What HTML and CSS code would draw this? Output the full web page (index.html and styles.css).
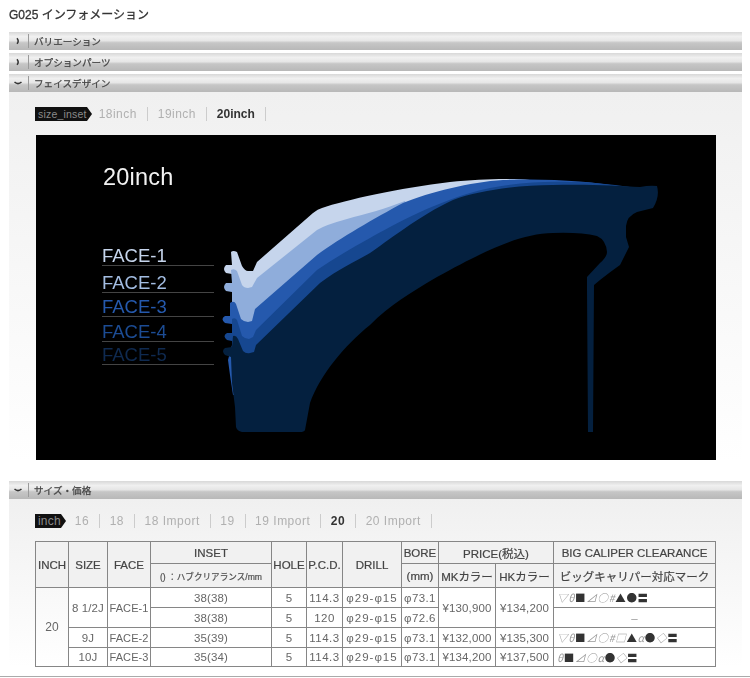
FILE: index.html
```html
<!DOCTYPE html>
<html lang="ja">
<head>
<meta charset="utf-8">
<title>G025 インフォメーション</title>
<link rel="stylesheet" href="styles.css">
</head>
<body>
<div class="page">
  <h1 class="title">G025 インフォメーション</h1>

  <div class="bar"><span class="chev"><svg width="8" height="8" viewBox="0 0 8 8"><path d="M3 1.2 Q5.4 4 3 6.8" class="chev-path"/></svg></span><span class="bar-label">バリエーション</span></div>
  <div class="bar"><span class="chev"><svg width="8" height="8" viewBox="0 0 8 8"><path d="M3 1.2 Q5.4 4 3 6.8" class="chev-path"/></svg></span><span class="bar-label">オプションパーツ</span></div>
  <div class="bar"><span class="chev"><svg width="8" height="8" viewBox="0 0 8 8"><path d="M0.5 3 Q4 6.2 7.5 3" class="chev-path"/></svg></span><span class="bar-label">フェイスデザイン</span></div>

  <section class="panel panel-face">
    <div class="tabs">
      <span class="tag">size_inset</span>
      <span class="tab">18inch</span>
      <span class="tab">19inch</span>
      <span class="tab on">20inch</span>
    </div>
    <div class="chart">
      <svg class="wheel" width="680" height="325" viewBox="36 135 680 325">
        <path class="f1" d="M231 252 Q233 250 237 252 L242 266 Q245 271 248 271 L253 271 L257 262 L313 213 Q318 209 322 208 C345 200 400 188 450 182 C480 179 510 178 530 180 L530 215 L300 300 L232 300 L232 274 L226 273 Q222 269 226 265 L232 265 Z"/>
        <path class="f2" d="M231 270 Q234 268 237 271 L242 285 Q244 288 248 288 L252 287 L257 278 L317 230 Q325 225 347 219 C365 214 385 209 405 201 L420 230 L260 340 L232 320 L232 292 L226 291 Q222 287 226 283 L232 283 Z"/>
        <path class="f3" d="M230 303 Q234 300 236 304 L241 319 Q244 322 248 322 L252 321 L255 309 L317 255 C340 238 375 218 403 203 C430 192 470 182 503 180 C545 178 590 181 625 187 L625 215 L500 215 L380 285 L300 400 L233 395 L230 375 L228 360 L232 345 L232 324 L225 323 Q220 319 225 316 L230 316 Z"/>
        <path class="f4" d="M232 319 Q235 317 237 320 L242 336 Q245 339 249 339 L253 337 L256 330 L317 270 C335 258 355 246 370 238 C395 224 430 205 470 193 C505 183 540 181 570 182 C590 182 610 184 630 187 L630 215 L500 215 L380 285 L300 400 L238 380 L232 360 L232 341 L227 340 Q222 336 227 333 L232 333 Z"/>
        <path class="f5" d="M233 336 Q236 335 238 339 L243 351 Q246 354 250 353 L254 352 L256 345 L320 283 C340 268 355 262 370 253 C385 243 420 215 453 200 C480 190 520 185 553 185 C590 184 620 186 640 187 Q650 185 657 186 Q660 197 653 208 L637 212 Q627 216 626 226 L626 237 L629 247 L620 265 Q610 272 600 280 L594 285 L593 432 L588 432 L587 290 L587 277 L600 263 Q607 257 607 252 Q606 240 597 236 Q580 232 553 233 C520 234 490 248 437 277 C410 293 390 305 370 325 C345 345 320 375 310 403 L305 430 Q304 432 300 432 L242 432 Q237 431 236 427 L235 407 L232 383 L231 357 L225 355 Q221 351 225 348 L232 347 Z"/>
      </svg>
      <div class="chart-size">20inch</div>
      <div class="face-list">
        <div class="face c1">FACE-1</div>
        <div class="face c2">FACE-2</div>
        <div class="face c3">FACE-3</div>
        <div class="face c4">FACE-4</div>
        <div class="face c5">FACE-5</div>
      </div>
    </div>
  </section>

  <div class="bar bar-size"><span class="chev"><svg width="8" height="8" viewBox="0 0 8 8"><path d="M0.5 3 Q4 6.2 7.5 3" class="chev-path"/></svg></span><span class="bar-label">サイズ・価格</span></div>

  <section class="panel panel-size">
    <div class="tabs tabs-inch">
      <span class="tag">inch</span>
      <span class="tab">16</span>
      <span class="tab">18</span>
      <span class="tab">18 Import</span>
      <span class="tab">19</span>
      <span class="tab">19 Import</span>
      <span class="tab on">20</span>
      <span class="tab">20 Import</span>
    </div>
    <table class="spec">
      <colgroup>
        <col class="w33"><col class="w39"><col class="w43"><col class="w121"><col class="w35"><col class="w36"><col class="w59"><col class="w37"><col class="w57"><col class="w58"><col class="w162">
      </colgroup>
      <thead>
        <tr class="h1">
          <th rowspan="2">INCH</th><th rowspan="2">SIZE</th><th rowspan="2">FACE</th><th>INSET</th><th rowspan="2">HOLE</th><th rowspan="2">P.C.D.</th><th rowspan="2">DRILL</th><th>BORE</th><th colspan="2">PRICE(税込)</th><th>BIG CALIPER CLEARANCE</th>
        </tr>
        <tr class="h2">
          <th class="note">() ：ハブクリアランス/mm</th><th>(mm)</th><th>MKカラー</th><th>HKカラー</th><th>ビッグキャリパー対応マーク</th>
        </tr>
      </thead>
      <tbody>
        <tr>
          <td rowspan="4" class="big">20</td><td rowspan="2">8 1/2J</td><td rowspan="2" class="fc">FACE-1</td><td>38(38)</td><td>5</td><td class="wide">114.3</td><td class="drill">φ29-φ15</td><td class="bore">φ73.1</td><td rowspan="2">¥130,900</td><td rowspan="2">¥134,200</td><td class="marks"><i>▽</i><i>θ</i><b>■</b><i>⊿</i><i>○</i><i>#</i><b>▲</b><b>●</b><b>〓</b></td>
        </tr>
        <tr>
          <td>38(38)</td><td>5</td><td class="wide">120</td><td class="drill">φ29-φ15</td><td class="bore">φ72.6</td><td class="dash">–</td>
        </tr>
        <tr>
          <td>9J</td><td class="fc">FACE-2</td><td>35(39)</td><td>5</td><td class="wide">114.3</td><td class="drill">φ29-φ15</td><td class="bore">φ73.1</td><td>¥132,000</td><td>¥135,300</td><td class="marks"><i>▽</i><i>θ</i><b>■</b><i>⊿</i><i>○</i><i>#</i><i>□</i><b>▲</b><i>α</i><b>●</b><i>◇</i><b>〓</b></td>
        </tr>
        <tr class="last">
          <td>10J</td><td class="fc">FACE-3</td><td>35(34)</td><td>5</td><td class="wide">114.3</td><td class="drill">φ29-φ15</td><td class="bore">φ73.1</td><td>¥134,200</td><td>¥137,500</td><td class="marks"><i>θ</i><b>■</b><i>⊿</i><i>○</i><i>α</i><b>●</b><i>◇</i><b>〓</b></td>
        </tr>
      </tbody>
    </table>
  </section>
  <div class="rule"></div>
</div>
</body>
</html>
```

FILE: styles.css
```css
* { box-sizing: border-box; }
html, body { margin: 0; background: #fff; }
body { font-family: "Liberation Sans", "Noto Sans CJK JP", sans-serif; color: #555; overflow: hidden; }
.page { width: 750px; height: 678px; padding: 9px 8px 0 9px; filter: blur(0.45px); }
.title { margin: 0 0 9px; height: 14px; font-size: 12px; line-height: 12px; font-weight: normal; color: #333; letter-spacing: 0; -webkit-text-stroke: 0.3px #333; }

.bar { display: flex; align-items: center; height: 18px; margin-bottom: 3px;
  background: linear-gradient(#d8d8d8 0, #f0f0f0 25%, #e6e6e6 48%, #c6c6c6 60%, #b8b8b8 100%); }
.chev { display: flex; align-items: center; justify-content: center; width: 20px; height: 14px; padding-right: 2px; border-right: 1px solid #9a9a9a; }
.chev-path { fill: none; stroke: #333; stroke-width: 1.5; }
.bar-label { padding-left: 5px; font-size: 9.6px; letter-spacing: 0; color: #444; -webkit-text-stroke: 0.25px #444; }

.panel { background: linear-gradient(#f0f0f0, #fff 95%); }
.panel-face { height: 389px; margin-top: -3px; padding: 15px 0 0 27px; }
.panel-size { height: 177px; margin-top: -3px; padding: 15px 0 0 27px; }
.rule { height: 1px; width: 750px; margin-left: -9px; background: #aaa; }

.tabs { display: flex; align-items: center; height: 14px; }
.tag { position: relative; display: block; height: 14px; margin-left: -1px; margin-right: 12px; padding: 0 0 0 3px; background: #111; color: #8a8a8a; font-size: 10.5px; line-height: 15px; letter-spacing: 0.2px; }
.tag::after { content: ""; position: absolute; left: 100%; top: 0; border-left: 5px solid #111; border-top: 7px solid transparent; border-bottom: 7px solid transparent; }
.tab { height: 14px; margin-right: 10px; padding-right: 10px; border-right: 1px solid #ccc; font-size: 12px; line-height: 14px; color: #b0b0b0; letter-spacing: 0.45px; }
.tab.on { color: #333; font-weight: bold; letter-spacing: 0; }

.chart { position: relative; width: 680px; height: 325px; margin-top: 14px; background: #000; overflow: hidden; }
.wheel { position: absolute; left: 0; top: 0; display: block; }
.f1 { fill: #c6d5ec; }
.f2 { fill: #8faddb; }
.f3 { fill: #2559ad; }
.f4 { fill: #164790; }
.f5 { fill: #04203f; }
.chart-size { position: absolute; left: 67px; top: 29px; font-size: 23.5px; line-height: 26px; color: #f2f2f2; letter-spacing: 0.2px; }
.face-list { position: absolute; left: 66px; top: 109px; width: 112px; }
.face { display: flex; align-items: flex-end; font-size: 18.5px; line-height: 19px; border-bottom: 1px solid #444; }
.c1 { height: 22px; color: #c6d5ec; }
.c2 { height: 27px; color: #a3bde2; }
.c3 { height: 24px; color: #2559ad; }
.c4 { height: 25px; color: #1c4c94; }
.c5 { height: 23px; color: #0f2a50; }

.tabs-inch .tag { margin-right: 14px; padding-right: 0; font-size: 12px; }
.tabs-inch .tab { margin-right: 9.5px; letter-spacing: 0.5px; }

.spec { width: 680px; margin: 13px 0 0 -1px; border-collapse: collapse; table-layout: fixed; font-size: 12px; color: #666; }
.spec th, .spec td { padding: 0; border: 1px solid #868686; text-align: center; white-space: nowrap; overflow: hidden; }
.spec th { background: #f1f1f1; font-weight: normal; color: #444; font-size: 11.5px; -webkit-text-stroke: 0.2px #444; }
.spec td { background: #fff; height: 20px; font-size: 11.5px; letter-spacing: 0.1px; }
.spec td.big { background: transparent; font-size: 12px; }
.spec .last td { height: 19px; }
.h1 th { height: 22px; }
.h2 th { height: 24px; }
.spec .note { font-size: 8.6px; color: #555; }
.spec td.fc { font-size: 11px; }
.spec td.wide { letter-spacing: 0.5px; }
.spec td.drill { letter-spacing: 1px; }
.spec td.bore { letter-spacing: 0.4px; }
.spec td.dash { color: #999; }
.spec td.marks { text-align: left; padding-left: 3px; font-family: "Noto Sans CJK JP", sans-serif; font-size: 10.5px; letter-spacing: 0.7px; }
.marks i { font-style: italic; color: #999; }
.marks b { font-weight: normal; color: #333; }
.w33 { width: 33px; } .w39 { width: 39px; } .w43 { width: 43px; } .w121 { width: 121px; }
.w35 { width: 35px; } .w36 { width: 36px; } .w59 { width: 59px; } .w37 { width: 37px; }
.w57 { width: 57px; } .w58 { width: 58px; } .w162 { width: 162px; }
```
